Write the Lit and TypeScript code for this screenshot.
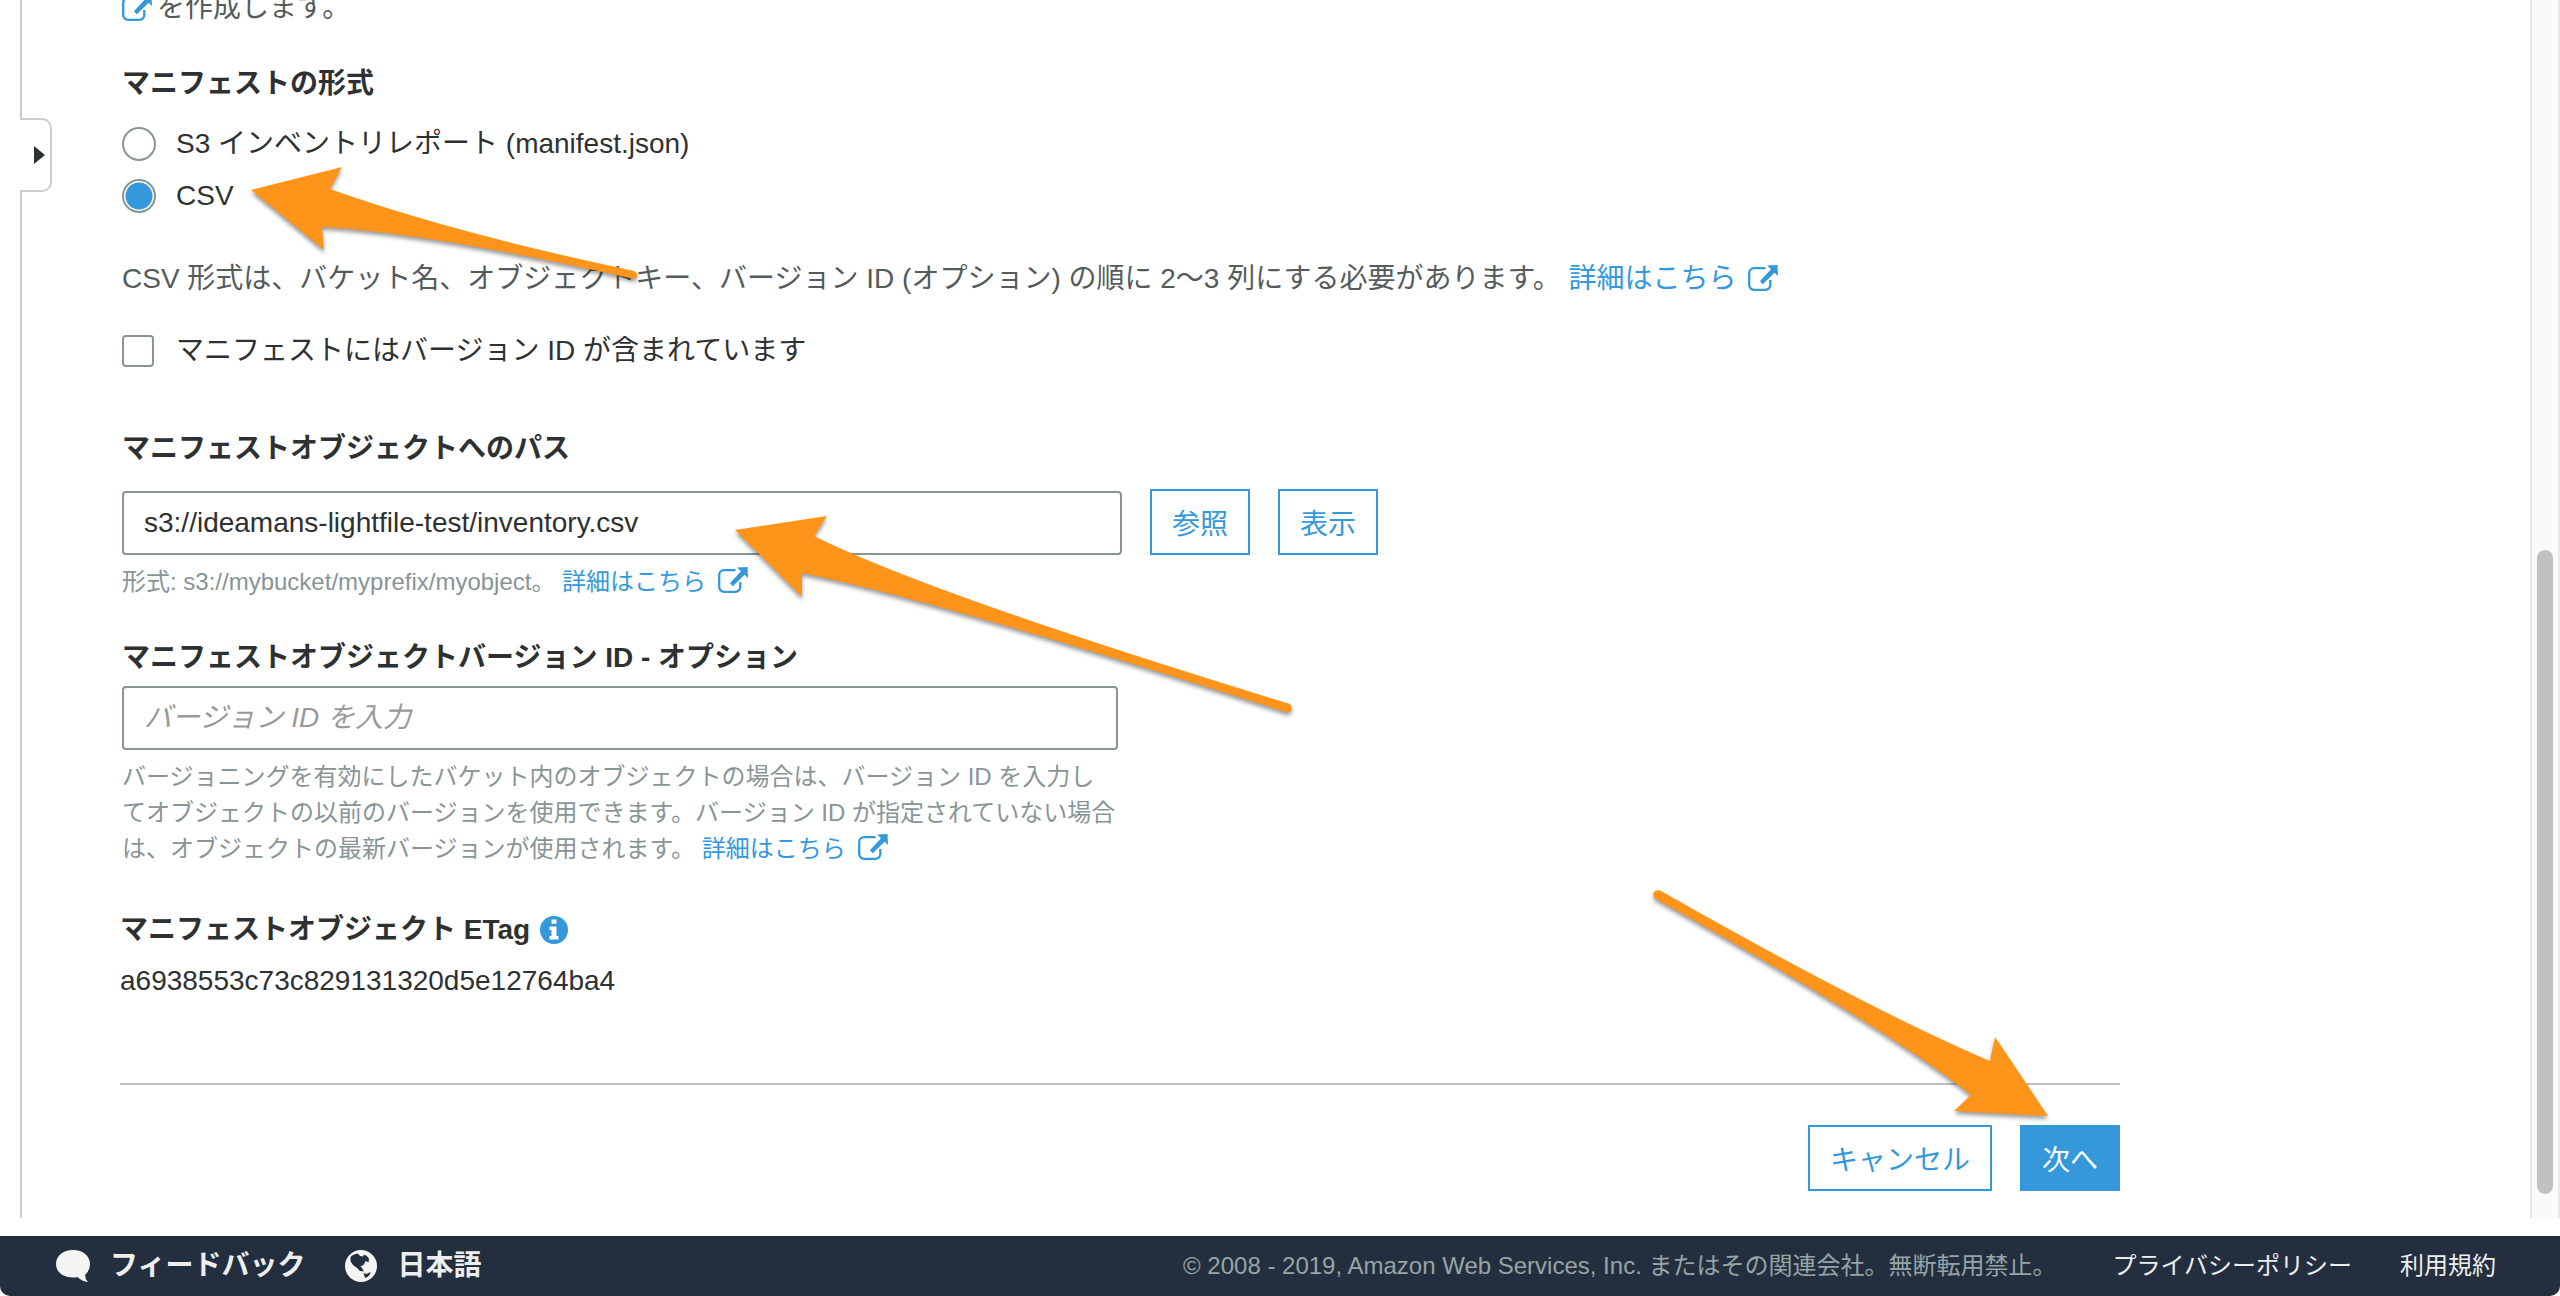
import { LitElement, html, css, svg } from "lit";
import { customElement, property, state } from "lit/decorators.js";

@customElement("external-icon")
class ExternalIcon extends LitElement {
  static styles = css`
    :host { display: inline-block; line-height: 0; }
    .icon { width: 30px; height: 26px; }
  `;
  render() {
    return html`<svg class="icon" viewBox="0 0 30 26" aria-hidden="true">
      <path d="M17.500 3.200H6a4.800 4.800 0 0 0-4.800 4.800v12A4.800 4.800 0 0 0 6 24.800h11.500a4.800 4.800 0 0 0 4.800-4.800v-5" fill="none" stroke="#3498db" stroke-width="2.300"/>
      <path d="M19 .5L29.500 0 30 11l-3.400-3.200-11.800 11.400-2.900-2.900L23 4.300z" fill="#3498db"/>
    </svg>`;
  }
}

@customElement("more-link")
class MoreLink extends LitElement {
  static styles = css`
    :host { display: inline; }
    .link { color: #3498db; text-decoration: none; white-space: nowrap; }
    .glyph { margin-left: 12px; vertical-align: -3px; }
  `;
  render() {
    return html`<a class="link" href="#">詳細はこちら<external-icon class="glyph"></external-icon></a>`;
  }
}

@customElement("page-footer")
class PageFooter extends LitElement {
  static styles = css`
    :host { display: block; background: #fff; }
    .bar {
      display: flex; align-items: center; justify-content: space-between;
      height: 60px; padding: 0 64px 0 56px; box-sizing: border-box;
      background: #232f3e; border-radius: 0 0 10px 10px; color: #eee;
    }
    .group { display: flex; align-items: center; gap: 40px; }
    .legal { gap: 48px; font-size: 24px; }
    .entry {
      display: flex; align-items: center; gap: 20px; padding: 0; border: 0;
      background: none; color: #eee; font: bold 28px/40px var(--ui-font);
    }
    .icon { display: block; height: 32px; }
    .copy { color: #95a5a6; margin-right: 8px; }
    .link { color: #eee; text-decoration: none; }
  `;
  render() {
    return html`<footer class="bar">
      <div class="group">
        <button class="entry" type="button">
          <svg class="icon" viewBox="0 0 34 32" aria-hidden="true">
            <path d="M17 0C7 0 0 6 0 14s7 13.500 17 13.500q2.500 0 4.500-.5q4.500 4.500 10.500 5q-3-3-3-7Q34 20.500 34 14C34 6 27 0 17 0z" fill="#f5f5f5"/>
          </svg>
          フィードバック
        </button>
        <button class="entry" type="button">
          <svg class="icon" viewBox="0 0 32 32" aria-hidden="true">
            <circle cx="16" cy="16" r="16" fill="#f5f5f5"/>
            <path d="M5.500 7Q8 4 13 3.500L15 6l3 .5 1-2q3 1 5 4l-.5 4-3-1.500-1.500 3.500-3.500 2 1.500 1.500 2 3.500-4-.5-3.500-3.500-3-2-3-4z" fill="#232f3e"/>
            <path d="M18.500 23l3 1 4-2q0 4-5.500 6z" fill="#232f3e"/>
          </svg>
          日本語
        </button>
      </div>
      <div class="group legal">
        <span class="copy">© 2008 - 2019, Amazon Web Services, Inc. またはその関連会社。無断転用禁止。</span>
        <a class="link" href="#">プライバシーポリシー</a>
        <a class="link" href="#">利用規約</a>
      </div>
    </footer>`;
  }
}

const ARROWS = [
  "M251 190L342 167L330 189Q450 232 634 271Q638 273 637 277Q635 280 630 278Q430 233 322 227L324 250Z",
  "M735 530L827 516L814 536Q930 594 1290 704Q1293 708 1291 711Q1289 713 1286 712Q940 601 802 573L802 597Z",
  "M1661 891Q1870 1010 1990 1061L1995 1037L2048 1116L1954 1111L1971 1095Q1890 1030 1656 899Q1652 896 1654 892Q1657 889 1661 891Z",
];

@customElement("app-root")
class AppRoot extends LitElement {
  static styles = css`
    :host {
      --ui-font: "Liberation Sans", "Noto Sans CJK JP", sans-serif;
      --blue: #3498db;
      position: relative; display: flex; flex-direction: column;
      min-height: 100vh; overflow: hidden; background: #fff;
      color: #2e3131; font: 28px/40px var(--ui-font);
    }
    .body { flex: 1; display: flex; padding-bottom: 18px; }
    .rail { width: 52px; padding-left: 20px; box-sizing: border-box; display: flex; flex-direction: column; }
    .edge { width: 2px; background: #ccc; }
    .edge.top { height: 118px; }
    .edge.rest { flex: 1; }
    .handle {
      height: 74px; box-sizing: border-box; padding: 0 0 0 14px; background: #fff;
      border: 2px solid #ccc; border-left: 0; border-radius: 0 10px 10px 0;
      display: flex; align-items: center;
    }
    .caret { border-left: 11px solid #2e3131; border-top: 9px solid transparent; border-bottom: 9px solid transparent; }
    .content { flex: 1; padding: 0 0 20px 68px; }
    .form { padding-left: 2px; }
    .intro { display: flex; align-items: center; gap: 5px; height: 40px; margin-top: -12px; color: #545b5b; }
    .heading { margin: 0; font-size: 28px; line-height: 40px; font-weight: bold; display: block; }
    .format { margin: 36px 0 0; padding: 0; border: 0; }
    .legend { padding: 0; }
    .choices { display: flex; flex-direction: column; gap: 12px; margin-top: 20px; }
    .choice { display: flex; align-items: center; gap: 20px; }
    .radio, .check {
      appearance: none; margin: 0; box-sizing: border-box; background: #fff;
      border: 2px solid #879596; flex: none;
    }
    .radio { width: 34px; height: 34px; border-radius: 50%; }
    .radio:checked { background: radial-gradient(circle, var(--blue) 13px, #fff 14px); }
    .check { width: 32px; height: 32px; border-radius: 4px; margin-right: 2px; }
    .note { margin: 43px 0 0; color: #545b5b; }
    .version { margin-top: 32px; }
    .section { margin-top: 58px; }
    .row { display: flex; align-items: flex-end; gap: 28px; margin-top: 20px; }
    .field {
      width: 1000px; height: 64px; box-sizing: border-box; padding: 0 20px; margin: 0;
      border: 2px solid #879596; border-radius: 4px; background: #fff;
      color: #2e3131; font: 28px var(--ui-font); outline: none;
    }
    .field.version-id { display: block; width: 996px; margin-top: 8px; }
    .field::placeholder { color: #999; font-style: italic; opacity: 1; }
    .button {
      height: 66px; min-width: 100px; padding: 0 20px; box-sizing: border-box;
      border: 2px solid var(--blue); background: #fff; color: var(--blue);
      font: 28px var(--ui-font); white-space: nowrap;
    }
    .button.primary { background: var(--blue); color: #fff; }
    .hint { margin: 9px 0 0; max-width: 1000px; color: #879596; font-size: 24px; line-height: 36px; }
    .section.tight { margin-top: 38px; }
    .etag { margin-top: 43px; }
    .etag-title { display: flex; align-items: center; gap: 10px; }
    .info { width: 28px; height: 28px; display: block; }
    .value { margin: 11px 0 0; }
    .actions {
      width: 2000px; max-width: 100%; box-sizing: border-box; margin-top: 82px; padding-top: 40px;
      border-top: 2px solid #bfbfbf; display: flex; justify-content: flex-end; gap: 28px;
    }
    .scroll {
      width: 30px; box-sizing: border-box; border: solid #e8e8e8; border-width: 0 2px;
      background: #fafafa; display: flex; flex-direction: column; align-items: center;
      justify-content: flex-end; padding-bottom: 24px;
    }
    .thumb { width: 16px; height: 644px; border-radius: 8px; background: #c1c1c1; }
    .arrows {
      position: absolute; left: 0; top: 0; width: 2560px; height: 1296px;
      pointer-events: none; filter: drop-shadow(0 3px 2px rgba(0, 0, 0, 0.4));
    }
  `;

  @state() private format = "csv";
  @property() path = "s3://ideamans-lightfile-test/inventory.csv";

  private choice(value: string, label: string) {
    return html`<label class="choice">
      <input class="radio" type="radio" name="format" .checked=${this.format === value}
        @change=${() => (this.format = value)} />
      <span>${label}</span>
    </label>`;
  }

  render() {
    return html`
      <div class="body">
        <div class="rail">
          <div class="edge top"></div>
          <button class="handle" type="button" aria-label="ナビゲーション"><span class="caret"></span></button>
          <div class="edge rest"></div>
        </div>
        <main class="content">
          <div class="form">
            <div class="intro"><external-icon></external-icon><span>を作成します。</span></div>
            <fieldset class="format">
              <legend class="legend heading">マニフェストの形式</legend>
              <div class="choices">
                ${this.choice("json", "S3 インベントリレポート (manifest.json)")}
                ${this.choice("csv", "CSV")}
              </div>
            </fieldset>
            <p class="note">CSV 形式は、バケット名、オブジェクトキー、バージョン ID (オプション) の順に 2〜3 列にする必要があります。 <more-link></more-link></p>
            <label class="choice version">
              <input class="check" type="checkbox" /><span>マニフェストにはバージョン ID が含まれています</span>
            </label>
            <div class="section">
              <label class="heading" for="path">マニフェストオブジェクトへのパス</label>
              <div class="row">
                <input class="field" id="path" type="text" .value=${this.path} />
                <button class="button" type="button">参照</button>
                <button class="button" type="button">表示</button>
              </div>
              <p class="hint">形式: s3://mybucket/myprefix/myobject。 <more-link></more-link></p>
            </div>
            <div class="section tight">
              <label class="heading" for="version-id">マニフェストオブジェクトバージョン ID - オプション</label>
              <input class="field version-id" id="version-id" type="text" placeholder="バージョン ID を入力" />
              <p class="hint">バージョニングを有効にしたバケット内のオブジェクトの場合は、バージョン ID を入力し<br>てオブジェクトの以前のバージョンを使用できます。バージョン ID が指定されていない場合<br>は、オブジェクトの最新バージョンが使用されます。 <more-link></more-link></p>
            </div>
          </div>
          <div class="etag">
            <h3 class="heading etag-title">
              マニフェストオブジェクト ETag
              <svg class="info" viewBox="0 0 28 28" aria-hidden="true">
                <circle cx="14" cy="14" r="14" fill="#3498db"/>
                <path d="M11.500 3.500h5v4.200h-5zM9.500 10.500h7v9.500h2v3.500h-9V20h2v-6h-2z" fill="#fff"/>
              </svg>
            </h3>
            <p class="value">a6938553c73c829131320d5e12764ba4</p>
          </div>
          <div class="actions">
            <button class="button" type="button">キャンセル</button>
            <button class="button primary" type="button">次へ</button>
          </div>
        </main>
        <div class="scroll"><div class="thumb"></div></div>
      </div>
      <page-footer></page-footer>
      <svg class="arrows" viewBox="0 0 2560 1296" aria-hidden="true">
        ${ARROWS.map((d) => svg`<path d=${d} fill="#ff941a"/>`)}
      </svg>
    `;
  }
}
